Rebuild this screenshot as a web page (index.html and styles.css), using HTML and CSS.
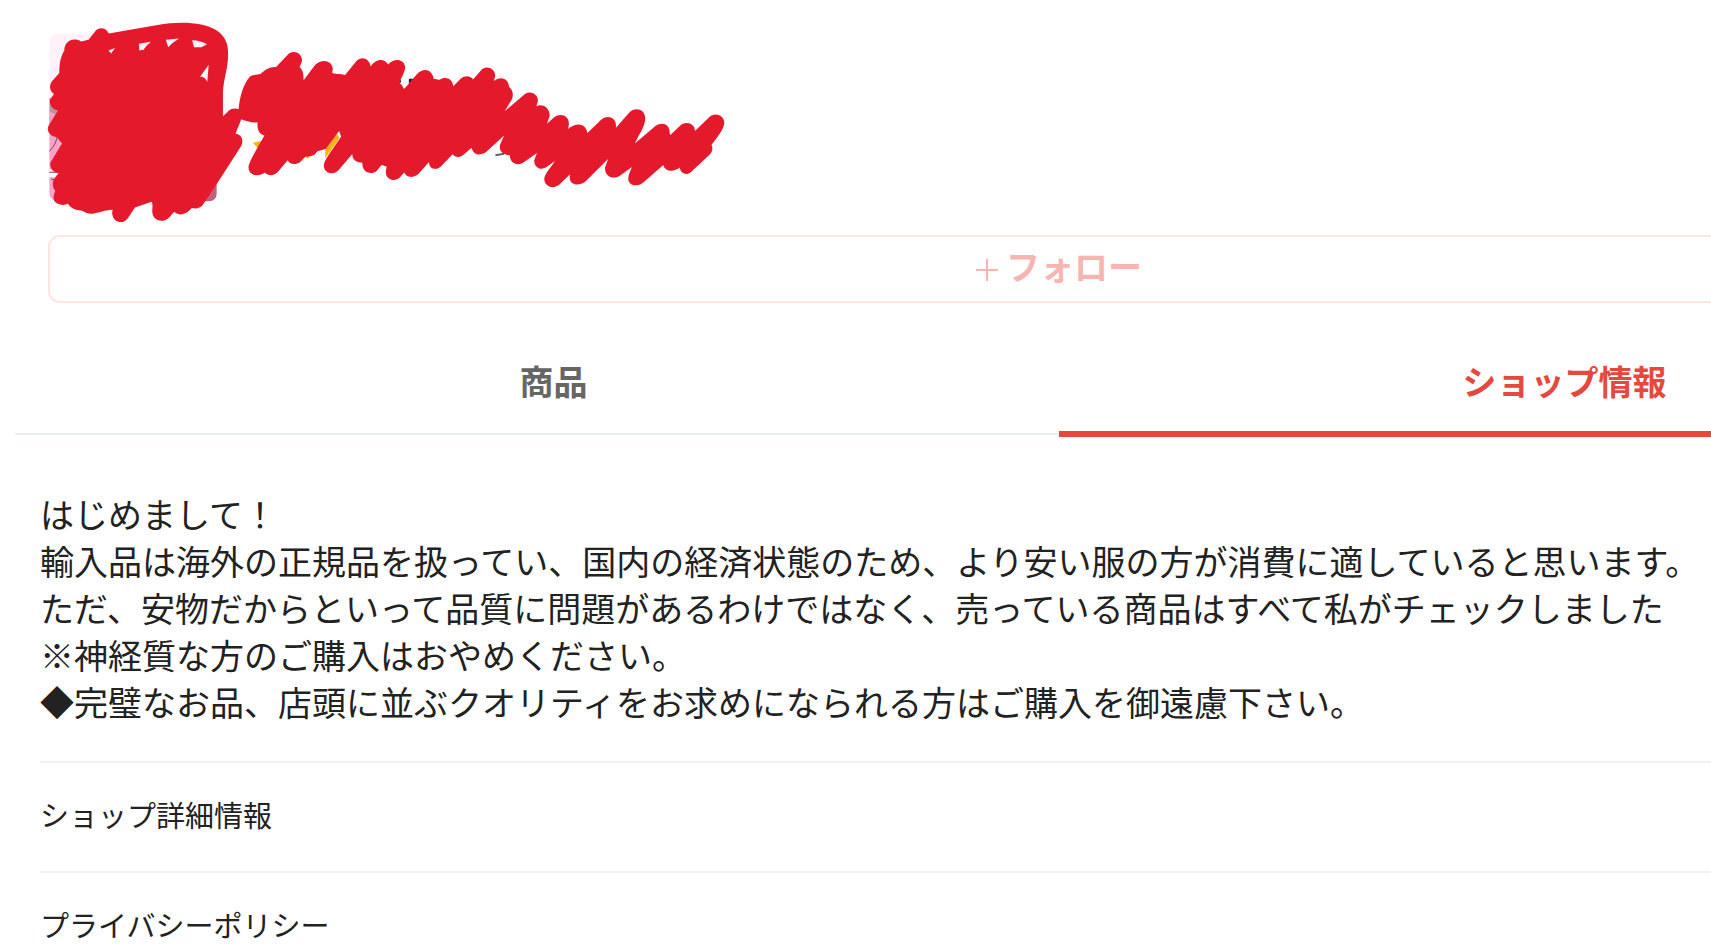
FILE: index.html
```html
<!DOCTYPE html>
<html lang="ja">
<head>
    <meta charset="UTF-8">
    <meta name="viewport" content="width=device-width, initial-scale=1.0">
    <title>ショップ情報</title>
    <link rel="stylesheet" href="styles.css">
</head>
<body>
    <div class="page">
        <header class="shop-header">
            <svg class="shop-profile" viewBox="0 0 740 236" aria-hidden="true">
                <!-- avatar -->
                <rect x="48" y="34" width="168" height="168" rx="8" fill="#fff2fa"/>
                <path d="M48 98l12 10v22H48z" fill="#b9989b"/>
                <path d="M48 112l12 6v52H48zM48 178h14v23h-6q-8 0-8-8z" fill="#fba3c8"/>
                <path d="M48 152q8-8 8-18M48 173h12M50 180l10 2" stroke="#74475c" fill="none"/>
                <path d="M190 174h26v20q0 8-8 8h-18z" fill="#c4607c"/>
                <g transform="translate(225 30) scale(.3333)">
                    <!-- rating and name -->
                    <path d="M82 340l40-8-22 28zM236 380h18l-6 8zM300 350l35-35 9 10-44 62z" fill="#ffb319"/>
                    <path d="M516 150h12v9h-12zM552 147h14v14h-14z" fill="#252337"/>
                    <path d="M813 378l26-5" stroke="#666" stroke-width="6"/>
                </g>
                <g class="scribble" transform="translate(30 10) scale(.3333)">
                    <path fill-rule="evenodd" d="M62 215L84 190C84 160 88 140 99 122C99 95 125 80 150 95L172 90L190 67C200 50 225 52 233 71L380 45C450 32 520 38 555 60C590 82 595 110 592 150C588 190 578 215 577 250V320L590 308C602 293 625 295 633 305C640 320 625 345 615 373C635 375 640 395 632 410L555 530L520 582C510 600 495 600 483 597C470 612 450 625 430 608L415 625C400 640 372 640 365 615C362 600 368 590 362 578L312 595L292 625C280 645 250 645 244 618C242 605 246 603 244 602C225 602 200 612 185 614C170 615 160 608 150 604C130 604 118 596 110 584C95 592 72 585 67 572C65 560 70 552 72 545C62 535 64 515 68 510L82 491C65 490 55 475 57 460L92 402L76 383C52 380 45 360 52 348L80 303C62 300 52 282 57 268L68 253C55 245 52 228 62 215ZM232 122L252 115L240 131ZM324 102L360 96Q345 108 338 120L325 122ZM405 90L445 86Q425 98 412 112ZM484 91Q510 92 529 103L512 112H490ZM534 165L530 216Q522 200 508 201Z"/>
                </g>
                <g class="scribble" transform="translate(225 30) scale(.3333)">
                    <path d="M39 240C42 200 55 160 73 141C85 133 97 136 105 133C120 120 130 111 152 112L188 74C205 58 232 70 230 95L223 112C234 122 235 135 235 152L270 105C290 85 322 92 323 118L321 130C335 134 345 132 360 136L393 95C410 78 432 85 437 110C450 90 475 82 490 104C505 85 535 85 541 110C542 125 530 140 524 160C532 165 533 172 538 178L575 135C595 112 622 118 627 147C633 148 640 150 645 150C665 138 685 150 686 170L708 147C722 135 740 138 746 150L780 118V370L741 355L715 378C700 388 690 382 684 375L650 410C635 425 612 420 613 398L580 435C562 448 545 445 538 430L525 445C508 460 480 450 483 425L485 412L470 407L455 425C440 438 410 432 412 400C395 400 380 390 382 374L340 423C325 440 295 432 296 408C298 392 310 378 348 322L342 305L302 358C285 365 275 362 270 375C260 382 250 382 240 382L225 398C210 408 192 405 187 393L160 425C145 442 125 440 118 430C100 445 68 440 69 412C72 395 90 365 117 318C100 315 95 300 96 278C80 282 70 275 60 274L48 270C38 262 38 250 39 240Z"/>
                </g>
                <g class="scribble" transform="translate(470 60) scale(.3333)">
                    <path d="M0 60H10L38 28C55 15 80 30 77 50L73 65C90 48 118 55 119 82C130 90 133 105 128 118L106 155L165 105C185 90 207 105 206 125L201 140C225 130 243 150 241 170L233 193L255 173C275 158 302 170 299 195L297 209C320 188 350 190 355 221L395 182C415 163 443 175 441 200V205L482 158C500 140 532 150 529 180C527 205 510 225 498 252L560 200C580 185 605 195 603 222L605 227L635 198C655 182 680 195 679 215L722 173C740 155 772 170 767 195C762 215 745 235 729 257C735 268 730 280 723 286L672 334C660 350 637 348 633 325C615 340 588 337 584 317L525 368C508 385 480 380 478 360C478 345 485 335 489 323L452 350C430 362 407 350 408 325L418 298L350 366C330 382 303 378 302 357V346L270 377C250 392 225 382 225 358C228 340 245 325 257 305L230 325C212 335 193 322 195 302L203 281L160 311C140 322 122 310 121 288C95 285 88 270 92 255L104 228L50 278C30 292 10 285 6 265H0Z"/>
                </g>
            </svg>
            <button class="follow-button">
                <svg class="plus" viewBox="0 0 22 22" aria-hidden="true">
                    <path d="M11 0v22M0 11h22"/>
                </svg>
                フォロー
            </button>
        </header>
        <nav class="tabs">
            <a class="tab" href="#items">商品</a>
            <a class="tab active" href="#info">ショップ情報</a>
        </nav>
        <main class="shop-info" id="info">
            <p class="description">はじめまして！<br>
            輸入品は海外の正規品を扱ってい、国内の経済状態のため、より安い服の方が消費に適していると思います。<br>
            ただ、安物だからといって品質に問題があるわけではなく、売っている商品はすべて私がチェックしました<br>
            ※神経質な方のご購入はおやめください。<br>
            ◆完璧なお品、店頭に並ぶクオリティをお求めになられる方はご購入を御遠慮下さい。</p>
            <a class="info-link" href="#detail">ショップ詳細情報</a>
            <a class="info-link" href="#privacy">プライバシーポリシー</a>
        </main>
    </div>
</body>
</html>
```
FILE: styles.css
```css
:root {
    --color-primary: #e5483f;
    --color-scribble: #e4192c;
    --color-text: #222;
    --color-line: #f1f3f8;
}

* {
    padding: 0;
    margin: 0;
    box-sizing: border-box;
}

html {
    overflow: hidden;
}

body {
    min-width: 2118px;
    background-color: #fff;
    color: var(--color-text);
    font-family: "Noto Sans CJK JP", sans-serif;
}

a {
    color: inherit;
    text-decoration: none;
}

.shop-header {
    padding-right: 48px;
}

.shop-profile {
    display: block;
    width: 740px;
    height: 235px;
}

.scribble {
    fill: var(--color-scribble);
}

.follow-button {
    display: flex;
    align-items: center;
    justify-content: center;
    gap: 8px;
    width: calc(100% - 48px);
    height: 68px;
    margin-left: 48px;
    padding-bottom: 6px;
    border: 2px solid #fde5e4;
    border-radius: 12px;
    background-color: #fff;
    color: #f6b5b1;
    font-family: inherit;
    font-size: 34px;
    font-weight: bold;
    line-height: 48px;
}

.plus {
    width: 22px;
    height: 22px;
    margin-top: 8px;
    fill: none;
    stroke: #f6b5b1;
    stroke-width: 2;
}

.tabs {
    display: flex;
    margin: 32px 15px 0;
    padding: 0 33px;
    background: linear-gradient(#e8eef2, #e8eef2) 0 98px / 100% 2px no-repeat;
}

.tab {
    flex: 1;
    height: 102px;
    color: #666;
    font-size: 34px;
    font-weight: bold;
    line-height: 92px;
    text-align: center;
}

.tab.active {
    margin-right: -33px;
    padding-right: 33px;
    border-bottom: 6px solid var(--color-primary);
    color: var(--color-primary);
}

.shop-info {
    padding: 53px 40px 0;
}

.description {
    padding-bottom: 36px;
    font-size: 34px;
    line-height: 47px;
}

.info-link {
    display: block;
    height: 110px;
    border-top: 2px solid var(--color-line);
    font-size: 29px;
    line-height: 102px;
}
```
